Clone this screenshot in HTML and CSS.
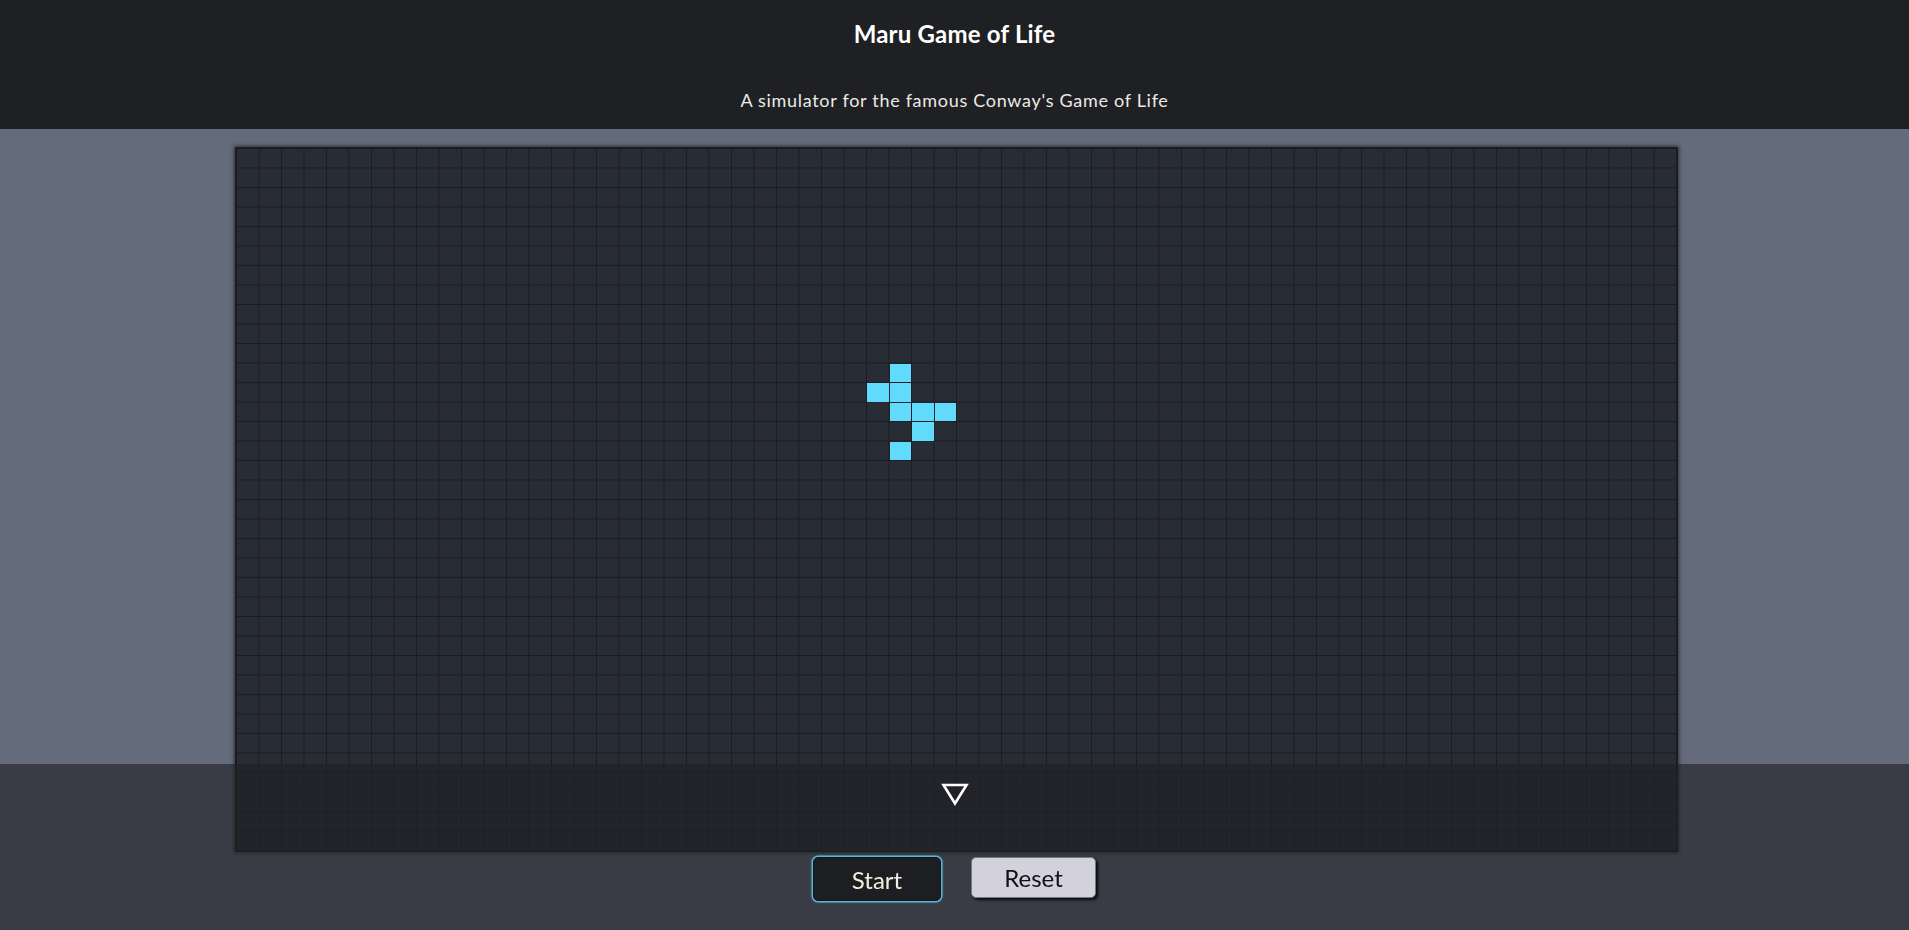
FILE: index.html
```html
<!DOCTYPE html>
<html lang="en">
<head>
<meta charset="utf-8">
<title>Maru Game of Life</title>
<link rel="stylesheet" href="styles.css">
</head>
<body>
<header class="header">
  <h1 class="title">Maru Game of Life</h1>
  <p class="subtitle">A simulator for the famous Conway's Game of Life</p>
</header>
<main class="main">
  <div class="board">
    <div class="cell live" style="grid-area: 12 / 30"></div>
    <div class="cell live" style="grid-area: 13 / 29"></div>
    <div class="cell live" style="grid-area: 13 / 30"></div>
    <div class="cell live" style="grid-area: 14 / 30"></div>
    <div class="cell live" style="grid-area: 14 / 31"></div>
    <div class="cell live" style="grid-area: 14 / 32"></div>
    <div class="cell live" style="grid-area: 15 / 31"></div>
    <div class="cell live" style="grid-area: 16 / 30"></div>
  </div>
</main>
<footer class="panel">
  <button class="toggle" aria-label="Toggle controls">
    <svg width="30" height="24" viewBox="0 0 30 24"><polygon points="3.5,3 26.5,3 15,21.5" fill="none" stroke="#ffffff" stroke-width="2.6" stroke-linejoin="miter"/></svg>
  </button>
  <div class="controls">
    <button class="btn btn-start">Start</button>
    <button class="btn btn-reset">Reset</button>
  </div>
</footer>
</body>
</html>
```
FILE: styles.css
```css
html, body {
  margin: 0;
  padding: 0;
}
body {
  background: #646b7a;
  font-family: "Lato", "Noto Sans", sans-serif;
  height: 930px;
  overflow: hidden;
}
.header {
  background: #1f2023;
  height: 129px;
  box-sizing: border-box;
  padding-top: 19px;
  text-align: center;
}
.title {
  margin: 0;
  font-size: 24px;
  line-height: 29px;
  font-weight: 700;
  color: #ffffff;
  letter-spacing: 0.2px;
}
.subtitle {
  margin: 41px 0 0;
  font-size: 18px;
  line-height: 22px;
  font-weight: 400;
  color: #ecebe6;
  letter-spacing: 0.7px;
}
.main {
  padding-top: 18px;
  display: flex;
  justify-content: center;
}
.board {
  display: grid;
  grid-template-columns: repeat(64, 22.5px);
  grid-template-rows: repeat(36, 19.5px);
  padding: 0 1px 1px 0;
  border: 1px solid #1a1b1e;
  background-color: #282c34;
  background-image:
    linear-gradient(to right, #1c1d21 1px, transparent 1px),
    linear-gradient(to bottom, #1c1d21 1px, transparent 1px);
  background-size: 22.5px 100%, 100% 19.5px;
  background-origin: content-box;
  box-shadow: 0 0 4px 1px rgba(0, 0, 0, 0.55);
  margin-left: 4px;
}
.cell.live {
  background: #61dafb;
  margin: 1px 0 0 1px;
}
.panel {
  position: fixed;
  left: 0;
  right: 0;
  bottom: 0;
  height: 166px;
  background: rgba(31, 33, 37, 0.62);
  display: flex;
  flex-direction: column;
  align-items: center;
}
.toggle {
  margin-top: 18px;
  padding: 0;
  border: 0;
  background: transparent;
  width: 30px;
  height: 24px;
  margin-left: 1px;
}
.toggle svg {
  display: block;
}
.controls {
  margin-top: 51px;
  display: flex;
  gap: 30px;
}
.btn {
  font-family: "Lato", "Noto Sans", sans-serif;
  font-size: 24px;
  font-weight: 400;
  border-radius: 5px;
  box-sizing: border-box;
  padding: 0;
}
.btn-start {
  width: 128px;
  height: 44px;
  background: #1d1e21;
  color: #f2efe2;
  border: 1px solid #141517;
  box-shadow: 0 0 0 1.5px #58b3d6, 0 0 3px 1px rgba(97, 218, 251, 0.4);
}
.btn-reset {
  width: 125px;
  height: 41px;
  background: #d3d1dc;
  color: #111114;
  border: 1px solid #77767d;
  box-shadow: 2px 2px 3px rgba(0, 0, 0, 0.85);
}
```
